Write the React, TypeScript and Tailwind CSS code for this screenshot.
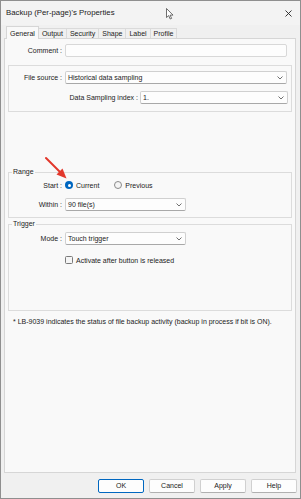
import React from 'react';

const Chevron: React.FC = () => (
  <svg width="6" height="4" viewBox="0 0 6 4" className="shrink-0">
    <polyline points="0.5,0.5 3,3 5.5,0.5" fill="none" stroke="#606060" strokeWidth="0.9" />
  </svg>
);

const Select: React.FC<{ value: string; className?: string }> = ({ value, className = '' }) => (
  <div
    className={`flex h-[13px] items-center justify-between rounded-[2px] border border-[#d0d0d0] border-b-[#a8a8a8] bg-[#fdfdfd] pl-[2px] pr-[3px] ${className}`}
  >
    <span className="leading-none">{value}</span>
    <Chevron />
  </div>
);

const Button: React.FC<{ label: string; primary?: boolean }> = ({ label, primary }) => (
  <button
    className={`h-[14px] w-[46px] rounded-[2px] border bg-[#fdfdfd] text-[7px] leading-none text-[#1a1a1a] ${
      primary ? 'border-[#0067c0]' : 'border-[#d0d0d0] border-b-[#b0b0b0]'
    }`}
  >
    {label}
  </button>
);

const tabs = ['General', 'Output', 'Security', 'Shape', 'Label', 'Profile'];

const App: React.FC = () => {
  return (
    <div className="relative flex h-[499px] w-[301px] flex-col overflow-hidden border border-[#8f8f8f] bg-[#f0f0f0] font-['Liberation_Sans',Arial,sans-serif] text-[7px] text-[#1b1b1b]">
      {/* title bar */}
      <div className="flex h-[24px] shrink-0 items-center justify-between bg-[#f3f3f3] pl-[5px] pr-[8px]">
        <span className="text-[7.8px] leading-none text-[#1a1a1a]">Backup (Per-page)'s Properties</span>
        <svg width="7" height="7" viewBox="0 0 7 7">
          <path d="M0.5 0.5 L6.5 6.5 M6.5 0.5 L0.5 6.5" stroke="#222" strokeWidth="0.9" />
        </svg>
      </div>

      {/* tabs */}
      <div className="flex h-[13px] shrink-0 items-end pl-[5px]">
        {tabs.map((t, i) =>
          i === 0 ? (
            <div
              key={t}
              className="relative z-10 -mb-px flex h-[13px] items-center border border-b-0 border-[#d6d6d6] bg-[#f9f9f9] px-[3px] leading-none"
            >
              {t}
            </div>
          ) : (
            <div
              key={t}
              className="flex h-[10px] items-center border border-b-0 border-l-0 border-[#dadada] bg-[#f0f0f0] px-[3px] leading-none"
            >
              {t}
            </div>
          )
        )}
      </div>

      {/* page */}
      <div className="ml-[3px] mr-[4px] flex flex-1 flex-col border border-[#d6d6d6] bg-[#f9f9f9]">
        <div className="mt-[5px] flex items-center">
          <span className="w-[57px] text-right leading-none">Comment :</span>
          <div className="ml-[3px] h-[13px] w-[222px] rounded-[2px] border border-[#d8d8d8] bg-[#fdfdfd]" />
        </div>

        <div className="mx-[3px] mt-[8px] flex flex-col gap-[7px] border border-[#dcdcdc] pb-[7px] pl-0 pr-[3px] pt-[5px]">
          <div className="flex items-center">
            <span className="w-[53px] text-right leading-none">File source :</span>
            <Select value="Historical data sampling" className="ml-[3px] w-[222px]" />
          </div>
          <div className="flex items-center justify-end">
            <span className="mr-[2px] leading-none">Data Sampling index :</span>
            <Select value="1." className="w-[148px]" />
          </div>
        </div>

        <fieldset className="mx-[3px] mt-[55px] border border-[#dcdcdc] pb-[6px]">
          <legend className="ml-[3px] px-[1px] text-[7px] leading-[10px]">Range</legend>
          <div className="mt-[3px] flex h-[10px] items-center">
            <span className="w-[53px] text-right leading-none">Start :</span>
            <span className="ml-[3px] flex h-[8px] w-[8px] items-center justify-center rounded-full bg-[#0067c0]">
              <span className="h-[3px] w-[3px] rounded-full bg-white" />
            </span>
            <span className="ml-[3px] leading-none">Current</span>
            <span className="ml-[15px] h-[8px] w-[8px] rounded-full border border-[#8a8a8a] bg-[#f5f5f5]" />
            <span className="ml-[3px] leading-none">Previous</span>
          </div>
          <div className="mt-[8px] flex items-center">
            <span className="w-[53px] text-right leading-none">Within :</span>
            <Select value="90 file(s)" className="ml-[3px] w-[121px]" />
          </div>
        </fieldset>

        <fieldset className="mx-[3px] mt-[1px] border border-[#dcdcdc] pb-[46px]">
          <legend className="ml-[3px] px-[1px] text-[7px] leading-[10px]">Trigger</legend>
          <div className="mt-[3px] flex items-center">
            <span className="w-[53px] text-right leading-none">Mode :</span>
            <Select value="Touch trigger" className="ml-[3px] w-[121px]" />
          </div>
          <div className="mt-[11px] flex items-center pl-[56px]">
            <span className="h-[8px] w-[8px] rounded-[1.5px] border border-[#7a7a7a] bg-[#f5f5f5]" />
            <span className="ml-[3px] leading-none">Activate after button is released</span>
          </div>
        </fieldset>

        <p className="ml-[8px] mt-[7px] leading-none">
          * LB-9039 indicates the status of file backup activity (backup in process if bit is ON).
        </p>
      </div>

      {/* buttons */}
      <div className="flex h-[25px] shrink-0 items-center justify-end gap-[5px] pr-[3px]">
        <Button label="OK" primary />
        <Button label="Cancel" />
        <Button label="Apply" />
        <Button label="Help" />
      </div>

      {/* mouse pointer */}
      <svg className="absolute left-[165px] top-[7px]" width="8" height="12" viewBox="0 0 8 12">
        <path d="M0.5 0.5 L0.5 9.5 L2.7 7.6 L4.2 11 L5.6 10.4 L4.1 7.1 L7 7.1 Z" fill="#fff" stroke="#333" strokeWidth="0.7" strokeLinejoin="round" />
      </svg>

      {/* red annotation arrow */}
      <svg className="absolute left-[42px] top-[154px]" width="28" height="28" viewBox="0 0 28 28">
        <line x1="3" y1="3" x2="18" y2="18" stroke="#e2372b" strokeWidth="2" strokeLinecap="round" />
        <polygon points="23.5,23.5 13.5,19.5 19.5,13.5" fill="#e2372b" />
      </svg>
    </div>
  );
};

export default App;
